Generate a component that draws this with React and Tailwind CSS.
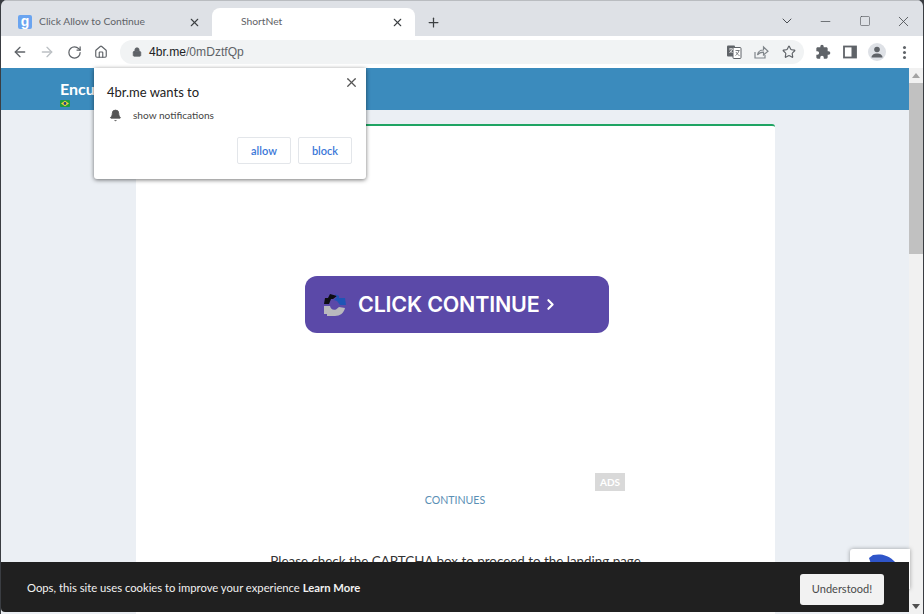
import React from 'react';
import { ArrowLeft, ArrowRight, RotateCw, Home, Lock, Star, X, Plus, ChevronDown, Minus, Square, Bell, ChevronRight } from 'lucide-react';

function TranslateIcon() {
  return (
    <svg width="16" height="16" viewBox="0 0 16 16" className="text-[#5f6368]">
      <rect x="1" y="1.5" width="8" height="11" rx="1" fill="currentColor" />
      <rect x="7" y="3.5" width="8" height="11" rx="1" fill="#fff" stroke="currentColor" strokeWidth="1" />
      <path d="M3 5h4M5 4v1M3.5 9 6.5 5.5M4 6.5l2.5 2.5" stroke="#fff" strokeWidth="0.8" fill="none" />
      <path d="M9.5 6.5h4M11.5 6v.5M13 6.5c-.5 2-2 4-3.5 5M10 8c.7 1.500 2 3 3.500 3.500" stroke="currentColor" strokeWidth="0.8" fill="none" />
    </svg>
  );
}

function ShareIcon() {
  return (
    <svg width="16" height="16" viewBox="0 0 16 16" fill="none" stroke="#80868b" strokeWidth="1.200">
      <path d="M2 8v6h10v-3" />
      <path d="M4.500 11c.5-3.500 3-5 6-5V3l4.500 4.200L10.500 11V8.200c-2.500 0-4.500.8-6 2.800z" />
    </svg>
  );
}

function PuzzleIcon() {
  return (
    <svg width="16" height="16" viewBox="0 0 24 24" fill="#5f6368">
      <path d="M20.500 11H19V7c0-1.100-.9-2-2-2h-4V3.500a2.500 2.500 0 0 0-5 0V5H4c-1.100 0-2 .9-2 2v3.800h1.500a2.700 2.700 0 0 1 0 5.400H2V20c0 1.100.9 2 2 2h3.800v-1.500a2.700 2.700 0 0 1 5.400 0V22H17c1.100 0 2-.9 2-2v-4h1.500a2.500 2.500 0 0 0 0-5z" />
    </svg>
  );
}

function SidePanelIcon() {
  return (
    <svg width="14" height="14" viewBox="0 0 14 14">
      <rect x="1" y="1.500" width="12" height="11" fill="none" stroke="#5f6368" strokeWidth="1.800" />
      <rect x="8.500" y="1.500" width="4.500" height="11" fill="#5f6368" />
    </svg>
  );
}

function ProfileIcon() {
  return (
    <div className="w-[18px] h-[18px] rounded-full bg-[#dee1e6] flex items-center justify-center">
      <svg width="14" height="14" viewBox="0 0 14 14" fill="#5f6368">
        <circle cx="7" cy="4.500" r="2.800" />
        <path d="M1.500 12.500c0-2.500 2.500-4 5.500-4s5.500 1.500 5.500 4z" />
      </svg>
    </div>
  );
}

function BrazilFlag() {
  return (
    <svg width="10" height="7" viewBox="0 0 10 7">
      <rect width="10" height="7" rx="1" fill="#1f9b3f" />
      <path d="M5 .8 9 3.500 5 6.200 1 3.500z" fill="#f4d23a" />
      <circle cx="5" cy="3.500" r="1.400" fill="#1d3f8a" />
    </svg>
  );
}

function ContinueLogo() {
  return (
    <svg width="23" height="23" viewBox="0 0 23 23">
      <path d="M1 11 2 5 5 5 7 1 14 3 10 6 8 6 6 11z" fill="#0d0d12" />
      <path d="M12 1 16 3 16 5 22 5 23 12 17 12 14 8 11 7 14 4z" fill="#1f55b5" />
      <path d="M1 13h6c.5 3 3 4.500 6 3.500L16 14l6 1c-1 5-5 8-10 8H4l0-2-3 0z" fill="#b9b9bd" />
    </svg>
  );
}

export default function App() {
  return (
    <div className="relative w-[924px] h-[614px] overflow-hidden bg-[#3a3d42] font-['Lato',sans-serif]">
      <div className="flex flex-col h-full ml-px mr-px rounded-t-[6px] overflow-hidden">
        {/* tab strip */}
        <div className="h-[36px] shrink-0 bg-[#dee1e6] flex items-end pl-[4px] border-t border-[#b9bcc0]">
          <div className="w-[207px] h-[28px] flex items-center pl-[13px] pr-[11px]">
            <div className="w-[14px] h-[14px] rounded-[2px] bg-[#6aa4f0] flex items-center justify-center text-white text-[14px] font-bold leading-none pb-[3px] font-['Liberation_Sans',sans-serif]">g</div>
            <span className="ml-[7px] text-[10.300px] text-[#5f6368] flex-1 whitespace-nowrap">Click Allow to Continue</span>
            <X size={13} strokeWidth={2} className="text-[#3c4043]" />
          </div>
          <div className="w-[203px] h-[28px] bg-white rounded-t-[8px] flex items-center pl-[29px] pr-[11px]">
            <span className="text-[10.300px] text-[#5f6368] flex-1">ShortNet</span>
            <X size={13} strokeWidth={2} className="text-[#3c4043]" />
          </div>
          <div className="h-[28px] flex items-center ml-[11px] flex-1">
            <Plus size={15} strokeWidth={2} className="text-[#3c4043]" />
            <div className="ml-auto flex items-center text-[#4a4d52]">
              <div className="w-[39px] flex justify-center"><ChevronDown size={16} strokeWidth={1.500} className="mb-[2px]" /></div>
              <div className="w-[39px] flex justify-center"><Minus size={15} strokeWidth={1.200} className="mb-[2px]" /></div>
              <div className="w-[39px] flex justify-center"><Square size={12} strokeWidth={1.200} className="mb-[2px]" /></div>
              <div className="w-[39px] flex justify-center"><X size={17} strokeWidth={1.200} className="mb-[2px]" /></div>
            </div>
          </div>
        </div>

        {/* toolbar */}
        <div className="h-[32px] shrink-0 bg-white flex items-center pl-[11px]">
          <ArrowLeft size={16} strokeWidth={2} className="text-[#5f6368]" />
          <ArrowRight size={16} strokeWidth={2} className="text-[#bcc0c4] ml-[11px]" />
          <RotateCw size={15} strokeWidth={2} className="text-[#5f6368] ml-[12px]" />
          <Home size={14} strokeWidth={2} className="text-[#5f6368] ml-[12px]" />
          <div className="ml-[12px] w-[684px] h-[24px] rounded-full bg-[#f1f3f4] flex items-center pl-[12px] pr-[8px]">
            <Lock size={10} strokeWidth={2} fill="currentColor" className="text-[#5f6368]" />
            <span className="ml-[7px] text-[12.100px] leading-none text-[#202124] font-['Liberation_Sans',sans-serif]">4br.me<span className="text-[#5f6368]">/0mDztfQp</span></span>
            <div className="ml-auto flex items-center">
              <TranslateIcon />
              <div className="ml-[11px]"><ShareIcon /></div>
              <Star size={14} strokeWidth={2} className="text-[#5f6368] ml-[13px]" />
            </div>
          </div>
          <div className="ml-[11px]"><PuzzleIcon /></div>
          <div className="ml-[12px]"><SidePanelIcon /></div>
          <div className="ml-[11px]"><ProfileIcon /></div>
          <div className="ml-[17px] flex flex-col gap-[2px]">
            <span className="w-[3px] h-[3px] rounded-full bg-[#5f6368]" />
            <span className="w-[3px] h-[3px] rounded-full bg-[#5f6368]" />
            <span className="w-[3px] h-[3px] rounded-full bg-[#5f6368]" />
          </div>
        </div>

        {/* viewport */}
        <div className="flex-1 min-h-0 flex relative">
          <div className="w-[908px] shrink-0 bg-[#ebeff4] overflow-hidden">
            <div className="h-[42px] bg-[#3b8bbd] pl-[59px] pt-[11px]">
              <div className="text-white text-[16px] leading-[20px] font-bold">Encu</div>
              <div className="flex mt-[1px]"><BrazilFlag /></div>
            </div>
            <div className="mt-[14px] ml-[135px] w-[639px] h-[500px] bg-white border-t-2 border-[#1fa463] rounded-t-[3px] flex flex-col items-center">
              <button className="mt-[150px] ml-[3px] w-[304px] h-[57px] rounded-[12px] bg-[#5b49a8] flex items-center pl-[18px] text-white">
                <ContinueLogo />
                <span className="ml-[12px] text-[21.500px] font-semibold font-['Inter',sans-serif] tracking-[-0.2px] whitespace-nowrap">CLICK CONTINUE</span>
                <ChevronRight size={17} strokeWidth={3} className="ml-[2px]" />
              </button>
              <div className="mt-[140px] w-full flex justify-end pr-[150px]">
                <span className="w-[30px] h-[18px] bg-[#d9d9d9] text-white text-[10px] font-bold flex items-center justify-center">ADS</span>
              </div>
              <a className="mt-[1px] text-[10.600px] leading-[16px] text-[#5a8fb5] pr-[1px]">CONTINUES</a>
              <p className="mt-[43px] text-[13.400px] text-[#333] whitespace-nowrap">Please check the CAPTCHA box to proceed to the landing page</p>
            </div>
          </div>
          {/* scrollbar */}
          <div className="w-[14px] bg-[#f1f1f1] flex flex-col items-center">
            <div className="h-[15px] flex items-center justify-center">
              <span className="border-x-[4px] border-b-[5px] border-x-transparent border-b-[#a3a3a3]" />
            </div>
            <div className="w-full h-[171px] bg-[#c1c1c1]" />
            <div className="mt-auto h-[16px] flex items-center justify-center">
              <span className="border-x-[4px] border-t-[5px] border-x-transparent border-t-[#505050]" />
            </div>
          </div>

          {/* recaptcha badge peeking out behind the cookie bar */}
          <div className="absolute left-[849px] top-[481px] w-[60px] h-[40px] bg-white rounded-tl-[3px] shadow-[0_0_4px_rgba(0,0,0,0.35)] overflow-hidden">
            <svg width="60" height="40" viewBox="0 0 60 40">
              <path d="M19 9 L23 6 C30 5 38 5 46 14 L40 18 L22 18z" fill="#2f55c9" />
            </svg>
          </div>

          {/* cookie bar */}
          <div className="absolute left-0 bottom-[2px] w-[908px] h-[50px] bg-[#202020] flex items-center pl-[26px] pr-[25px] rounded-bl-[4px]">
            <span className="mt-[2px] text-[11.250px] text-[#f2f2f2]">Oops, this site uses cookies to improve your experience <b className="font-bold">Learn More</b></span>
            <button className="ml-auto mt-[5px] w-[84px] h-[31px] bg-[#f2f2f2] rounded-[3px] text-[11px] text-[#4a4a4a]">Understood!</button>
          </div>
        </div>
      </div>

      {/* notification prompt */}
      <div className="absolute left-[94px] top-[68px] w-[272px] h-[111px] bg-white rounded-b-[3px] shadow-[0_1px_4px_rgba(0,0,0,0.55)] pt-[15px] pl-[13px] pr-[14px]">
        <X size={15} strokeWidth={2} className="absolute right-[7px] top-[7px] text-[#555]" />
        <div className="text-[13px] leading-[18px] text-[#222]">4br.me wants to</div>
        <div className="mt-[7px] flex items-center">
          <Bell size={13} fill="#555" strokeWidth={1.500} className="ml-[2px] text-[#555]" />
          <span className="ml-[11px] text-[10.100px] text-[#444]">show notifications</span>
        </div>
        <div className="mt-[14px] flex justify-end gap-[7px]">
          <button className="w-[54px] h-[27px] pt-[1px] border border-[#e3e6ea] rounded-[2px] text-[11px] font-semibold text-[#3b78d8]">allow</button>
          <button className="w-[54px] h-[27px] pt-[1px] border border-[#e3e6ea] rounded-[2px] text-[11px] font-semibold text-[#3b78d8]">block</button>
        </div>
      </div>
    </div>
  );
}
